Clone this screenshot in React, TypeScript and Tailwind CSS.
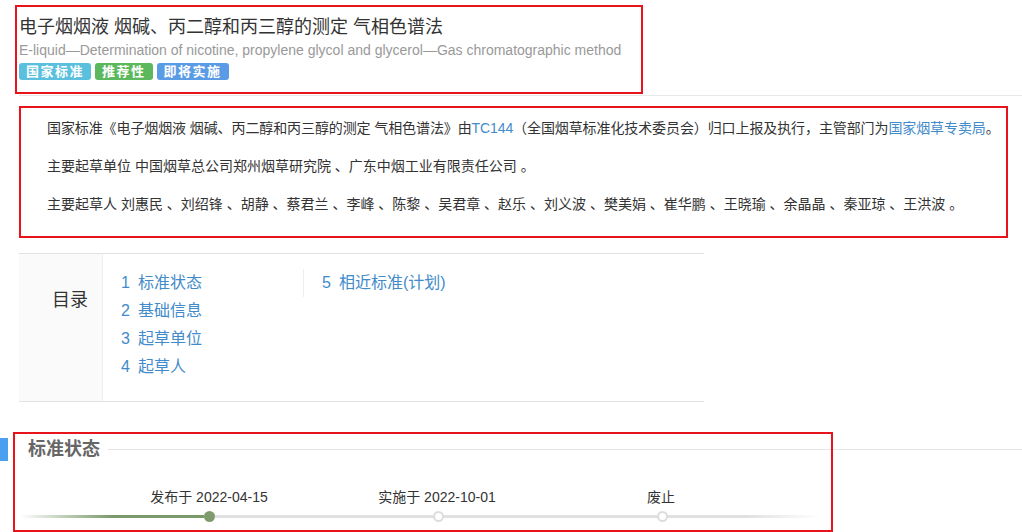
const font = { fontFamily: '"Liberation Sans", "Noto Sans CJK SC", sans-serif' };

const tocLeft = ['标准状态', '基础信息', '起草单位', '起草人'];

export default function App() {
  return (
    <div className="min-h-screen bg-white text-[#333]" style={font}>
      {/* title block */}
      <div className="ml-[15px] mt-[5px] h-[89px] w-[628px] border-2 border-[#e8141b] pl-[2px] pt-[7px]">
        <h1 className="text-[18px] leading-[26px] font-normal text-[#333]">
          电子烟烟液 烟碱、丙二醇和丙三醇的测定 气相色谱法
        </h1>
        <div className="text-[14px] leading-[20px] text-[#999]">
          E-liquid—Determination of nicotine, propylene glycol and glycerol—Gas chromatographic method
        </div>
        <div className="mt-[3px] flex gap-[4px]">
          <span className="flex h-[17px] items-center rounded-[3px] bg-[#5bc0de] px-[7px] text-[13px] font-semibold tracking-[1.5px] text-white">国家标准</span>
          <span className="flex h-[17px] items-center rounded-[3px] bg-[#5cb85c] px-[7px] text-[13px] font-semibold tracking-[1.5px] text-white">推荐性</span>
          <span className="flex h-[17px] items-center rounded-[3px] bg-[#5a9be6] px-[7px] text-[13px] font-semibold tracking-[1.5px] text-white">即将实施</span>
        </div>
      </div>
      <div className="ml-[19px] mt-px h-px bg-[#e8e8e8]" />

      {/* description */}
      <div className="ml-[19px] mt-[10px] h-[132px] w-[989px] border-2 border-[#e8141b] pl-[26px] pt-px text-[14px] leading-[38px]">
        <p className="whitespace-nowrap tracking-[-0.1px]">
          国家标准《电子烟烟液 烟碱、丙二醇和丙三醇的测定 气相色谱法》由<span className="text-[#428bca]">TC144</span>（全国烟草标准化技术委员会）归口上报及执行，主管部门为<span className="text-[#428bca]">国家烟草专卖局</span>。
        </p>
        <p className="whitespace-nowrap">主要起草单位 中国烟草总公司郑州烟草研究院 、广东中烟工业有限责任公司 。</p>
        <p className="whitespace-nowrap">主要起草人 刘惠民 、刘绍锋 、胡静 、蔡君兰 、李峰 、陈黎 、吴君章 、赵乐 、刘义波 、樊美娟 、崔华鹏 、王晓瑜 、余晶晶 、秦亚琼 、王洪波 。</p>
      </div>

      {/* table of contents */}
      <div className="ml-[19px] mt-[15px] flex h-[149px] w-[685px] border-y border-[#e2e2e2]">
        <div className="w-[84px] border-r border-[#eee] bg-[#fafafa] pr-[14px] pt-[34px] text-right text-[18px] leading-[24px]">
          目录
        </div>
        <div className="flex pl-[18px] pt-[15px] text-[16px] leading-[28px] text-[#428bca]">
          <div className="w-[182px]">
            {tocLeft.map((t, i) => (
              <div key={t}>
                <span>{i + 1}</span>
                <span className="ml-[8px]">{t}</span>
              </div>
            ))}
          </div>
          <div className="h-[28px] border-l border-[#eee] pl-[18px]">
            <span>5</span>
            <span className="ml-[8px]">相近标准(计划)</span>
          </div>
        </div>
      </div>

      {/* status section */}
      <div className="relative mt-[30px] h-[100px] pt-[6px]">
        <div className="flex h-[23px] items-center">
          <div className="h-full w-[8px] bg-[#4a9ff0]" />
          <div className="ml-[20px] text-[18px] font-bold leading-[23px] text-[#666]">标准状态</div>
          <div className="ml-[8px] h-px flex-1 bg-[#e5e5e5]" />
        </div>
        <div className="mt-[26px] flex text-[14px] leading-[20px] text-[#333]">
          <div className="ml-[109px] w-[200px] text-center">发布于 2022-04-15</div>
          <div className="ml-[28px] w-[200px] text-center">实施于 2022-10-01</div>
          <div className="ml-[24px] w-[200px] text-center">废止</div>
        </div>
        <div className="ml-[20px] mt-[4px] flex w-[801px] items-center">
          <div className="h-[3px] w-[184px] bg-gradient-to-r from-transparent via-[#7a9a6a] to-[#7a9a6a]" />
          <div className="h-[11px] w-[11px] rounded-full bg-[#7d9b6d]" />
          <div className="h-[3px] w-[218px] bg-[#e0e0e0]" />
          <div className="h-[11px] w-[11px] rounded-full border-2 border-[#ddd] bg-white" />
          <div className="h-[3px] w-[213px] bg-[#e0e0e0]" />
          <div className="h-[11px] w-[11px] rounded-full border-2 border-[#ddd] bg-white" />
          <div className="h-[3px] flex-1 bg-gradient-to-r from-[#e0e0e0] via-[#e0e0e0] to-transparent" />
        </div>
        <div className="pointer-events-none absolute left-[13px] top-0 h-[100px] w-[820px] border-2 border-[#e8141b]" />
      </div>
    </div>
  );
}
